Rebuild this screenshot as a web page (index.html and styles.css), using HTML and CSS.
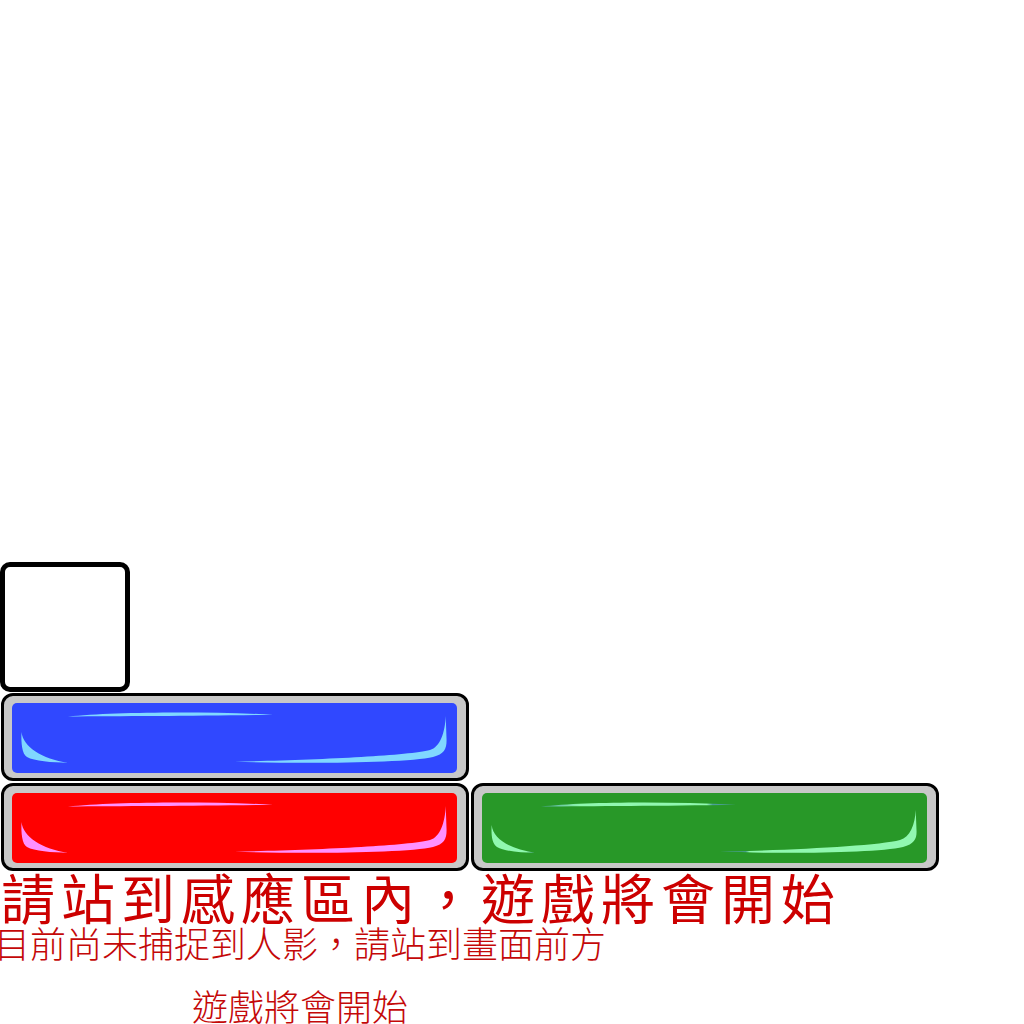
FILE: index.html

```html
<!DOCTYPE html>
<html lang="zh-Hant">
<head>
    <meta charset="UTF-8">
    <meta name="viewport" content="width=device-width, initial-scale=1.0">
    <title>遊戲</title>
    <link rel="stylesheet" href="styles.css">
</head>
<body>
    <div class="preview"></div>

    <div class="row">
        <div class="btn btn-blue">
            <svg class="gloss" viewBox="0 0 445 70">
                <path d="M56 13.5C100 9 190 8 261 11.7C190 13 110 13 56 13.5Z"/>
                <path d="M9.5 29C11 44 30 56 56 59.7C40 59.7 22 58 15 54C10 51 9 40 9.5 29Z"/>
                <path d="M433.7 13C433 30 428 44 418 47C395 53 300 57 223 58.7C290 61 395 60 421 54C433 51 435 45 434.5 35Z"/>
            </svg>
        </div>
    </div>

    <div class="row">
        <div class="btn btn-red">
            <svg class="gloss" viewBox="0 0 445 70">
                <path d="M56 13.5C100 9 190 8 261 11.7C190 13 110 13 56 13.5Z"/>
                <path d="M9.5 29C11 44 30 56 56 59.7C40 59.7 22 58 15 54C10 51 9 40 9.5 29Z"/>
                <path d="M433.7 13C433 30 428 44 418 47C395 53 300 57 223 58.7C290 61 395 60 421 54C433 51 435 45 434.5 35Z"/>
            </svg>
        </div>
        <div class="btn btn-green">
            <svg class="gloss" viewBox="0 0 445 70">
                <defs>
                    <!-- the green gloss fades to teal at its tips -->
                    <linearGradient id="greenTop" gradientUnits="userSpaceOnUse" x1="59" y1="0" x2="254" y2="0">
                        <stop offset="0" stop-color="#4a9f98"/>
                        <stop offset="0.2" stop-color="#90f8b0"/>
                        <stop offset="0.85" stop-color="#90f8b0"/>
                        <stop offset="0.88" stop-color="#4a9f98"/>
                    </linearGradient>
                    <linearGradient id="greenLeft" gradientUnits="userSpaceOnUse" x1="9" y1="0" x2="53" y2="0">
                        <stop offset="0.8" stop-color="#90f8b0"/>
                        <stop offset="1" stop-color="#4a9f98"/>
                    </linearGradient>
                    <linearGradient id="greenRight" gradientUnits="userSpaceOnUse" x1="238" y1="0" x2="435" y2="0">
                        <stop offset="0.13" stop-color="#4a9f98"/>
                        <stop offset="0.15" stop-color="#90f8b0"/>
                    </linearGradient>
                </defs>
                <path fill="url(#greenTop)" d="M59 13.5C100 9 180 8 254 11.7C180 13 110 13 59 13.5Z"/>
                <path fill="url(#greenLeft)" d="M9.7 32C11 46 28 56 53 59.7C38 59.7 22 58 15 54C10 51 9 42 9.7 32Z"/>
                <path fill="url(#greenRight)" d="M433.7 17C433 32 428 44 418 47C395 53 310 57 238 58.7C300 61 395 60 421 54C433 51 435 45 434.5 37Z"/>
            </svg>
        </div>
    </div>

    <h1 class="title">請站到感應區內，遊戲將會開始</h1>
    <div class="hint">
        <p class="hint-status">目前尚未捕捉到人影，請站到畫面前方</p>
        <p class="hint-next">遊戲將會開始</p>
    </div>
</body>
</html>
```

FILE: styles.css

```css
body {
    margin: 0;
    padding: 562px 0 0 1px;
    background: #fff;
    font-family: "Noto Sans CJK TC", sans-serif;
    color: #cc0000;
    overflow: hidden;
}

.preview {
    width: 120px;
    height: 120px;
    margin: 0 0 1px -1px;
    border: 5px solid #000;
    border-radius: 10px;
}

.row {
    display: flex;
    gap: 2px;
    margin-bottom: 2px;
}

.btn {
    box-sizing: border-box;
    width: 468px;
    height: 88px;
    padding: 7px 8px;
    border: 3px solid #000;
    border-radius: 12px;
    background: #c8c8c8;
}

.gloss {
    display: block;
    width: 445px;
    height: 70px;
    border-radius: 5px;
}

.btn-blue .gloss {
    background: #3048ff;
    fill: #80d8ff;
}

.btn-red .gloss {
    background: #ff0000;
    fill: #ff90ff;
}

.btn-green .gloss {
    background: #289828;
    fill: #90f8b0;
}

.title {
    margin: 0 0 3px;
    padding-top: 4px;
    font-size: 54px;
    font-weight: 400;
    line-height: 40px;
    letter-spacing: 6px;
    white-space: nowrap;
}

.hint {
    width: 600px;
    margin-left: -1px;
    text-align: center;
    font-size: 36px;
    font-weight: 300;
    line-height: 44px;
    color: #c40808;
}

.hint p {
    margin: 0;
    white-space: nowrap;
}

.hint .hint-status {
    margin-left: -6px;
    text-align: left;
}

.hint-next {
    padding-top: 21px;
    line-height: 40px;
}
```
